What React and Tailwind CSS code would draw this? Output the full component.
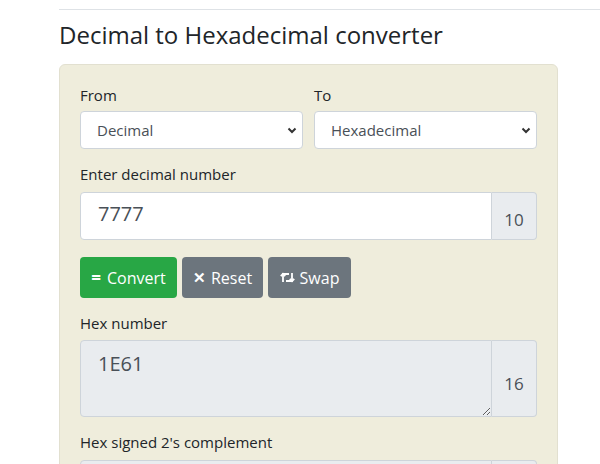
import React from 'react';

// Icono "retweet" dibujado a mano para el botón Swap
function SwapIcon() {
    return (
        <svg width="15" height="11" viewBox="0 0 15 11" fill="none" stroke="currentColor" strokeWidth="1.8">
            <path d="M3 10V2h6" />
            <path d="M0.8 4.2L3 1.8l2.2 2.4" />
            <path d="M12 1v8H6" />
            <path d="M9.8 6.8L12 9.2l2.2-2.4" />
        </svg>
    );
}

function Chevron() {
    return (
        <svg width="10" height="7" viewBox="0 0 10 7" className="absolute right-[5px] top-[15px] pointer-events-none">
            <path d="M1.5 1.5L5 5l3.5-3.5" fill="none" stroke="#333" strokeWidth="2" />
        </svg>
    );
}

function SelectBox({ value }) {
    return (
        <div className="relative w-full h-[38px] shrink-0 bg-white border border-[#ced4da] rounded-[4px] flex items-center pl-[16px] text-[15px] text-[#495057]">
            {value}
            <Chevron />
        </div>
    );
}

export default function App() {
    return (
        <div className="min-h-screen bg-white text-[#212529] font-['Open_Sans',sans-serif]">
            <div className="pl-[59px]">
                <div className="h-[10px] border-b border-[#dee2e6]"></div>
                <h1 className="mt-[9px] text-[24px] leading-[32px] font-normal text-[#212529]">
                    Decimal to Hexadecimal converter
                </h1>

                <div className="mt-[13px] w-[499px] bg-[#efeddc] border border-[#e2e0d0] rounded-[6px] px-5 pt-[18px] pb-4">
                    {/* From / To */}
                    <div className="flex gap-[11px]">
                        <div className="flex-1 flex flex-col">
                            <label className="text-[15px] leading-[24px] mb-[4px]">From</label>
                            <SelectBox value="Decimal" />
                        </div>
                        <div className="flex-1 flex flex-col">
                            <label className="text-[15px] leading-[24px] mb-[4px]">To</label>
                            <SelectBox value="Hexadecimal" />
                        </div>
                    </div>

                    {/* Número decimal */}
                    <label className="block mt-[13px] text-[15px] leading-[24px] mb-[6px]">Enter decimal number</label>
                    <div className="flex h-[48px]">
                        <div className="flex-1 bg-white border border-[#ced4da] rounded-l-[4px] flex items-center pl-[17px] pb-[4px] text-[20px] text-[#495057]">
                            7777
                        </div>
                        <div className="w-[45px] bg-[#e9ecef] border border-l-0 border-[#ced4da] rounded-r-[4px] flex items-center justify-center pt-[8px] text-[17px] text-[#495057]">
                            10
                        </div>
                    </div>

                    {/* Botones */}
                    <div className="flex gap-[5px] mt-[17px]">
                        <button className="h-[41px] w-[97px] bg-[#28a745] text-white rounded-[4px] text-[16px] flex items-center justify-center gap-[6px]">
                            <span className="font-bold text-[17px] leading-none">=</span>
                            <span>Convert</span>
                        </button>
                        <button className="h-[41px] w-[81px] bg-[#6c757d] text-white rounded-[4px] text-[16px] flex items-center justify-center gap-[5px]">
                            <span className="font-bold text-[15px] leading-none">✕</span>
                            <span>Reset</span>
                        </button>
                        <button className="h-[41px] w-[83px] bg-[#6c757d] text-white rounded-[4px] text-[16px] flex items-center justify-center gap-[5px]">
                            <SwapIcon />
                            <span>Swap</span>
                        </button>
                    </div>

                    {/* Resultado hex */}
                    <label className="block mt-[13px] text-[15px] leading-[24px] mb-[5px]">Hex number</label>
                    <div className="flex h-[77px]">
                        <textarea
                            readOnly
                            value="1E61"
                            className="flex-1 h-full bg-[#e9ecef] border border-[#ced4da] rounded-l-[4px] pl-[17px] pt-[8px] text-[20px] text-[#495057] outline-none font-['Open_Sans',sans-serif]"
                        />
                        <div className="w-[45px] bg-[#e9ecef] border border-l-0 border-[#ced4da] rounded-r-[4px] flex items-center justify-center pt-[11px] text-[17px] text-[#495057]">
                            16
                        </div>
                    </div>

                    <label className="block mt-[13px] text-[15px] leading-[24px] mb-[6px]">Hex signed 2's complement</label>
                    <div className="flex h-[77px]">
                        <div className="flex-1 bg-[#e9ecef] border border-[#ced4da] rounded-l-[4px]"></div>
                        <div className="w-[45px] bg-[#e9ecef] border border-l-0 border-[#ced4da] rounded-r-[4px]"></div>
                    </div>
                </div>
            </div>
        </div>
    );
}
